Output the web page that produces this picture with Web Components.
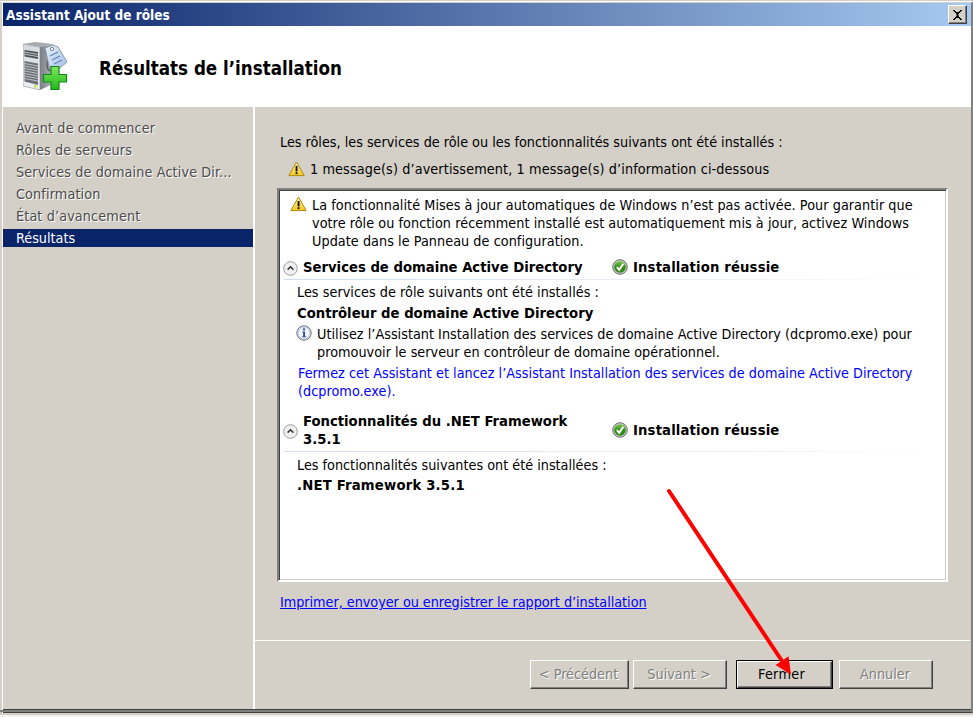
<!DOCTYPE html>
<html lang="fr"><head><meta charset="utf-8"><title>Assistant Ajout de rôles</title>
<style>
html,body{margin:0;padding:0;height:717px;overflow:hidden;background:#d4d0c8}
body{font:14.28px/18px "DejaVu Sans",sans-serif;font-stretch:condensed;color:#000}
.bold{font-weight:bold;font-size:14.7px}
</style></head><body>
<template id="t-icon-warn"><style>:host{display:inline-block;width:17px;height:16px;flex:none}svg{display:block}</style>
<svg width="17" height="16" viewBox="0 0 17 16"><defs><linearGradient id="w" x1="0" y1="0" x2="0" y2="1"><stop offset="0" stop-color="#fff6a8"/><stop offset="1" stop-color="#f4c81e"/></linearGradient></defs><path d="M8.5 1 L16.2 14.6 H.8 Z" fill="url(#w)" stroke="#b08a10" stroke-width="1" stroke-linejoin="round"/><rect x="7.6" y="5" width="1.9" height="5.4" fill="#111"/><rect x="7.6" y="11.2" width="1.9" height="1.9" fill="#111"/></svg></template>
<template id="t-icon-info"><style>:host{display:inline-block;width:16px;height:16px;flex:none}svg{display:block}</style>
<svg width="16" height="16" viewBox="0 0 16 16"><circle cx="8" cy="8" r="7.2" fill="#d8dce8" stroke="#6f7488"/><circle cx="8" cy="8" r="5.6" fill="#f6f8fd" stroke="#bcc3d4" stroke-width=".6"/><rect x="6.9" y="3.4" width="2.2" height="2" fill="#2f56a8"/><path d="M6.3 6.6H9.1V11.2H10V12.2H6.3V11.2H7.1V7.6H6.3Z" fill="#2f56a8"/></svg></template>
<template id="t-icon-ok"><style>:host{display:inline-block;width:16px;height:16px;flex:none}svg{display:block}</style>
<svg width="16" height="16" viewBox="0 0 16 16"><defs><linearGradient id="g" x1="0" y1="0" x2="0" y2="1"><stop offset="0" stop-color="#7cc84c"/><stop offset=".55" stop-color="#2f8e14"/><stop offset="1" stop-color="#2f8414"/></linearGradient></defs><circle cx="8" cy="8" r="7.3" fill="#c4c8c4" stroke="#6b716b"/><circle cx="8" cy="8" r="5.8" fill="url(#g)"/><path d="M4.9 8.1 7.2 10.8 11.3 4.8" fill="none" stroke="#fff" stroke-width="2"/></svg></template>
<template id="t-icon-toggle"><style>:host{display:inline-block;width:15px;height:15px;flex:none}svg{display:block}</style>
<svg width="15" height="15" viewBox="0 0 15 15"><circle cx="7.5" cy="7.5" r="6.8" fill="#f0f0f0" stroke="#9c9c9c"/><path d="M4.6 8.6 7.5 5.8 10.4 8.6" fill="none" stroke="#333" stroke-width="1.5"/></svg></template>
<template id="t-icon-server"><style>:host{display:block;width:46px;height:50px;flex:none}svg{display:block}</style>
<svg width="46" height="50" viewBox="0 0 46 50"><defs><linearGradient id="s" x1="0" y1="0" x2="0" y2="1"><stop offset="0" stop-color="#d6dade"/><stop offset="1" stop-color="#eef0f2"/></linearGradient><linearGradient id="s2" x1="0" y1="0" x2="1" y2="0"><stop offset="0" stop-color="#7a8086"/><stop offset="1" stop-color="#b0b5b9"/></linearGradient><linearGradient id="tg" x1="0" y1="0" x2="1" y2="1"><stop offset="0" stop-color="#eaf1fa"/><stop offset="1" stop-color="#9cbde4"/></linearGradient><linearGradient id="p" x1="0" y1="0" x2="0" y2="1"><stop offset="0" stop-color="#7cea5c"/><stop offset="1" stop-color="#22b81c"/></linearGradient></defs>
<path d="M0 2 L17 5 V48 L0 44Z" fill="url(#s)" stroke="#8c9197" stroke-width=".6"/><path d="M0 2 L12 0 L30 2 L17 5Z" fill="#a7acb1"/><path d="M17 5 L30 2 V42 L17 48Z" fill="url(#s2)"/>
<path d="M1.500 8 L15 10V17L1.500 14.500Z" fill="#4e5459"/><path d="M1.500 10.200 15 12.300M1.500 12.300 15 14.500" stroke="#d8dbde" stroke-width=".8"/>
<path d="M1.500 19 L15 21.500V43L1.500 39.500Z" fill="#6a7076"/><path d="M1.500 21.500 15 24M1.500 24 15 26.500M1.500 26.500 15 29M1.500 29 15 31.500M1.500 31.500 15 34M1.500 34 15 36.500M1.500 36.500 15 39" stroke="#c7cbcf" stroke-width=".9"/><rect x="11" y="43" width="2.500" height="2.500" fill="#c6e33c"/>
<path d="M22 9 Q26 14 24 22 Q24 27 27 29" fill="none" stroke="#4c5257" stroke-width="1.200"/>
<path d="M22 6 L30 3 L35 5 L44 20 L32 30 L26 24Z" fill="url(#tg)" stroke="#8d99a8"/><circle cx="29" cy="7" r="1.600" fill="#fff" stroke="#78838f"/><path d="M27 14 35 10M29 18 37 14M31 22 39 18" stroke="#5f86bd" stroke-width="1.300"/>
<path d="M28 24.500H36V32.500H43.500V40H36V47.500H28V40H20.500V32.500H28Z" fill="url(#p)" stroke="#17861a" stroke-width="1.200"/></svg></template>

<template id="t-title"><style>:host{display:flex;align-items:center;justify-content:space-between;height:23px;padding:0 4px 0 3px;background:linear-gradient(90deg,#0a246a,#a6caf0);color:#fff;font-weight:bold;font-size:13.5px}
.x{width:19px;height:19px;box-sizing:border-box;background:#d4d0c8;border:1px solid;border-color:#fff #404040 #404040 #fff;box-shadow:inset -1px -1px #808080;display:flex;align-items:center;justify-content:center}</style>
<slot></slot><span class="x"><svg width="11" height="10" viewBox="0 0 11 10"><path d="M1 0H3V1H4V2H7V1H8V0H10V1H9V2H8V3H7V4H6.5V6H7V7H8V8H9V9H10V10H8V9H7V8H4V9H3V10H1V9H2V8H3V7H4V6H4.5V4H4V3H3V2H2V1H1Z" fill="#000"/></svg></span></template>

<template id="t-head"><style>:host{display:flex;align-items:center;height:81px;background:#fff;padding-left:20px;box-sizing:border-box;font-weight:bold;font-size:18.6px}
.t{margin-left:30px;margin-top:5px}</style><i-server></i-server><span class="t"><slot></slot></span></template>

<template id="t-nav"><style>:host{display:block;width:250px;flex:none;padding-top:11px;box-sizing:border-box}</style><slot></slot></template>

<template id="t-navitem"><style>:host{display:block;height:22px;line-height:20px;padding-left:13px;color:#4c4c4c;text-shadow:1px 1px 0 #fff;white-space:nowrap;letter-spacing:.12px}
:host([current]){background:#0a246a;color:#fff;height:18px;line-height:18px;margin-top:1px;text-shadow:none;letter-spacing:0}</style><slot></slot></template>

<template id="t-main"><style>:host{flex:1;display:flex;flex-direction:column;border-left:2px solid #fff;min-width:0}
.c{flex:1;padding:26px 23px 0 25px;display:flex;flex-direction:column;min-height:0}
.f{flex:none;border-top:1px solid #fff;height:69px;box-sizing:border-box;margin-right:1px}</style>
<div class="c"><slot></slot></div><div class="f"><slot name="footer"></slot></div></template>

<template id="t-summary"><style>:host{display:flex;align-items:center;gap:5px;margin:9px 0 10px 8px;height:18px;letter-spacing:.115px}</style><i-warn></i-warn><span><slot></slot></span></template>

<template id="t-box"><style>:host{display:block;box-sizing:border-box;height:394px;margin-left:-3px;background:#fff;border:2px solid;border-color:#808080 #fff #fff #808080;box-shadow:inset 1px 1px #404040, inset -1px -1px #d4d0c8;padding:6px 6px 0 5px;overflow:hidden}</style><slot></slot></template>

<template id="t-msg"><style>:host{display:flex;gap:5px;align-items:flex-start}
</style><slot name="icon"></slot><div><slot></slot></div></template>

<template id="t-section"><style>:host{display:block}
.h{display:grid;grid-template-columns:19px 309px 21px 1fr;align-items:center;font-weight:bold;font-size:14.7px;border-bottom:1px solid;border-image:linear-gradient(90deg,#cfdcee,#eef3f9 70%,#fff) 1;padding-bottom:3px}
.t{padding-right:20px}
.s{letter-spacing:.15px}
.b{padding:3px 0 0 13px}
i-toggle{margin-left:-1px;margin-top:2px}
</style><div class="h"><i-toggle></i-toggle><span class="t"><slot name="title"></slot></span><i-ok></i-ok><span class="s"><slot name="status"></slot></span></div><div class="b"><slot></slot></div></template>

<template id="t-button"><style>:host{display:flex;align-items:center;justify-content:center;box-sizing:border-box;height:29px;background:#d4d0c8;border:1px solid;border-color:#fff #404040 #404040 #fff;box-shadow:inset -1px -1px #808080;color:#000;padding:0 2px 1px 0}
:host([disabled]){color:#808080;text-shadow:1px 1px 0 #fff}
:host([default]){outline:1px solid #000;height:27px;margin-top:1px;padding-right:6px;letter-spacing:.3px}</style><slot></slot></template>

<template id="t-footer"><style>:host{display:flex;gap:4px;padding:19px 0 0 275px;height:100%;box-sizing:border-box}</style><slot></slot></template>

<template id="t-arrow"><style>:host{position:absolute;left:-3px;top:-3px;width:973px;height:717px;pointer-events:none}svg{display:block}</style>
<svg width="973" height="717"><path d="M669 491 L786 667" stroke="#fe0000" stroke-width="4" stroke-linecap="round" fill="none"/><path d="M790 673 L777 665 L788 657.500Z" fill="#fe0000" stroke="#fe0000" stroke-width="1.500"/></svg></template>

<template id="t-window"><style>:host{display:flex;flex-direction:column;box-sizing:border-box;width:973px;height:717px;position:relative;background:#d4d0c8;border-style:solid;border-width:3px 2px 8px 3px;border-color:#d4d0c8 #808080 #404040 #d4d0c8}
.b{flex:1;display:flex;min-height:0}
.l{position:absolute;pointer-events:none}
.edge-l{left:-1px;top:-2px;bottom:-8px;width:1px;background:#fff}
.edge-t{left:-3px;right:-2px;top:-2px;height:1px;background:#fff}
.edge-b1{left:-3px;right:-2px;bottom:-3px;height:2px;background:#808080}
.edge-b2{left:-3px;right:-2px;bottom:-6px;height:2px;background:#d4d0c8}
.edge-b3{left:-3px;right:-2px;bottom:-8px;height:2px;background:#f2f0ea}
</style>
<span class="l edge-l"></span><span class="l edge-t"></span><span class="l edge-b1"></span><span class="l edge-b2"></span><span class="l edge-b3"></span>
<slot name="title"></slot><slot name="head"></slot><div class="b"><slot name="nav"></slot><slot name="main"></slot></div><slot name="overlay"></slot></template>

<x-window>
<x-title slot="title">Assistant Ajout de rôles</x-title>
<x-head slot="head">Résultats de l’installation</x-head>
<x-nav slot="nav">
<x-navitem>Avant de commencer</x-navitem><x-navitem>Rôles de serveurs</x-navitem><x-navitem>Services de domaine Active Dir...</x-navitem><x-navitem>Confirmation</x-navitem><x-navitem>État d’avancement</x-navitem><x-navitem current>Résultats</x-navitem>
</x-nav>
<x-main slot="main">
<div class="intro">Les rôles, les services de rôle ou les fonctionnalités suivants ont été installés :</div>
<x-summary>1 message(s) d’avertissement, 1 message(s) d’information ci-dessous</x-summary>
<x-box>
<x-msg style="margin-left:6px;width:630px;letter-spacing:.05px"><i-warn slot="icon"></i-warn>La fonctionnalité Mises à jour automatiques de Windows n’est pas activée. Pour garantir que votre rôle ou fonction récemment installé est automatiquement mis à jour, activez Windows Update dans le Panneau de configuration.</x-msg>
<x-section style="margin-top:8px">
<span slot="title">Services de domaine Active Directory</span><span slot="status">Installation réussie</span>
<div style="letter-spacing:.04px">Les services de rôle suivants ont été installés :</div>
<div class="bold" style="margin-top:3px">Contrôleur de domaine Active Directory</div>
<x-msg style="margin-top:3px;margin-left:-1px;letter-spacing:.02px"><i-info slot="icon"></i-info>Utilisez l’Assistant Installation des services de domaine Active Directory (dcpromo.exe) pour promouvoir le serveur en contrôleur de domaine opérationnel.</x-msg>
<div style="color:#0000ff;margin:3px 10px 0 1px;letter-spacing:.03px">Fermez cet Assistant et lancez l’Assistant Installation des services de domaine Active Directory (dcpromo.exe).</div>
</x-section>
<x-section style="margin-top:12px">
<span slot="title">Fonctionnalités du .NET Framework 3.5.1</span><span slot="status">Installation réussie</span>
<div style="margin-top:1px">Les fonctionnalités suivantes ont été installées :</div>
<div class="bold" style="margin-top:2px;letter-spacing:.2px">.NET Framework 3.5.1</div>
</x-section>
</x-box>
<div style="margin:11px 0 0 0;color:#0000ff;text-decoration:underline;letter-spacing:-.03px">Imprimer, envoyer ou enregistrer le rapport d’installation</div>
<x-footer slot="footer">
<x-button disabled style="width:99px">&lt; Précédent</x-button><x-button disabled style="width:94px">Suivant &gt;</x-button><x-button default style="width:95px;margin-left:6px;margin-right:3px">Fermer</x-button><x-button disabled style="width:94px">Annuler</x-button>
</x-footer>
</x-main>
<x-arrow slot="overlay"></x-arrow>
</x-window>
<script>
const reg=(tag,id)=>customElements.define(tag,class extends HTMLElement{constructor(){super();this.attachShadow({mode:'open'}).appendChild(document.getElementById(id).content.cloneNode(true));}});
[['i-warn','t-icon-warn'],['i-info','t-icon-info'],['i-ok','t-icon-ok'],['i-toggle','t-icon-toggle'],['i-server','t-icon-server'],['x-title','t-title'],['x-head','t-head'],['x-nav','t-nav'],['x-navitem','t-navitem'],['x-main','t-main'],['x-summary','t-summary'],['x-box','t-box'],['x-msg','t-msg'],['x-section','t-section'],['x-button','t-button'],['x-footer','t-footer'],['x-arrow','t-arrow'],['x-window','t-window']].forEach(([a,b])=>reg(a,b));
</script>
</body></html>
